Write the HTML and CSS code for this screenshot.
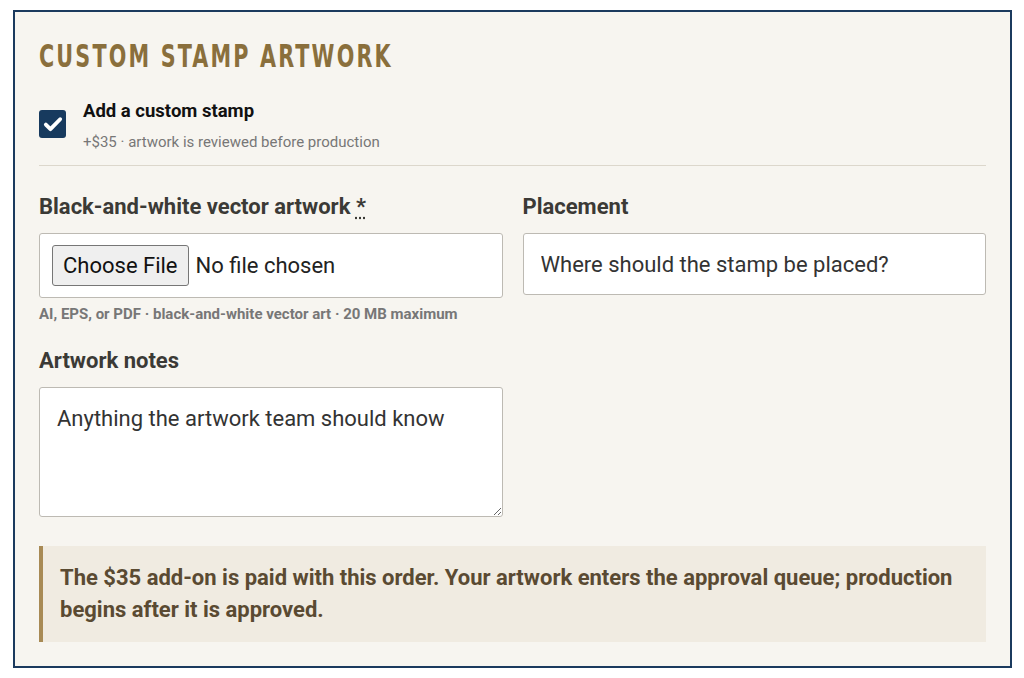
FILE: index.html
```html
<!DOCTYPE html>
<html lang="en">
<head>
<meta charset="utf-8">
<title>Custom stamp artwork</title>
<link rel="stylesheet" href="styles.css">
</head>
<body>
<div class="page">
  <section class="panel">
    <h2 class="panel-title">Custom Stamp Artwork</h2>

    <label class="opt">
      <input type="checkbox" class="opt-input" checked>
      <span class="opt-box" aria-hidden="true">
        <svg viewBox="0 0 24 24" width="22" height="22"><path d="M4.2 12.6l5 5L19.8 6.8" fill="none" stroke="#fff" stroke-width="4.2" stroke-linecap="round" stroke-linejoin="round"/></svg>
      </span>
      <span class="opt-text">
        <span class="opt-title">Add a custom stamp</span>
        <span class="opt-sub">+$35 · artwork is reviewed before production</span>
      </span>
    </label>

    <hr class="rule">

    <div class="grid">
      <div class="field">
        <label class="field-label" for="art">Black-and-white vector artwork <abbr class="req" title="required">*</abbr></label>
        <div class="file-wrap">
          <input type="file" id="art" class="file-input">
        </div>
        <p class="hint">AI, EPS, or PDF · black-and-white vector art · 20 MB maximum</p>
      </div>
      <div class="field">
        <label class="field-label" for="place">Placement</label>
        <input type="text" id="place" class="text-input" placeholder="Where should the stamp be placed?">
      </div>
      <div class="field">
        <label class="field-label" for="notes">Artwork notes</label>
        <textarea id="notes" class="notes" placeholder="Anything the artwork team should know"></textarea>
      </div>
    </div>

    <p class="notice">The $35 add-on is paid with this order. Your artwork enters the approval queue; production begins after it is approved.</p>
  </section>
</div>
</body>
</html>
```

FILE: styles.css
```css
* { box-sizing: border-box; }

html, body {
  margin: 0;
  background: #fff;
}

body {
  font-family: Roboto, "Liberation Sans", sans-serif;
  color: #333;
}

.page {
  padding: 10px 12px 12px 13px;
}

.panel {
  background: #f7f5f0;
  border: 2px solid #1b3a5e;
  padding: 24px;
}

/* condensed display heading: squeeze a bold sans horizontally */
.panel-title {
  display: inline-block;
  margin: 0;
  font-family: "DejaVu Sans Condensed", "DejaVu Sans", sans-serif;
  font-weight: 700;
  font-size: 32px;
  line-height: 40px;
  letter-spacing: 3px;
  text-transform: uppercase;
  white-space: nowrap;
  color: #8a6f3c;
  transform: scaleX(0.72);
  transform-origin: left center;
}

.opt {
  display: flex;
  align-items: flex-start;
  gap: 17px;
  margin-top: 21px;
  cursor: pointer;
}

.opt-input {
  position: absolute;
  opacity: 0;
  pointer-events: none;
}

.opt-box {
  flex: none;
  width: 27px;
  height: 28px;
  margin-top: 13px;
  border-radius: 3px;
  background: #173a5e;
  display: flex;
  align-items: center;
  justify-content: center;
}

.opt-text {
  display: flex;
  flex-direction: column;
}

.opt-title {
  font-size: 18.5px;
  font-weight: 700;
  line-height: 28px;
  color: #111;
}

.opt-sub {
  margin-top: 7px;
  font-size: 15px;
  line-height: 20px;
  color: #777;
}

.rule {
  margin: 13px 0 27px;
  border: 0;
  border-top: 1px solid #dcd7cc;
}

.grid {
  display: grid;
  grid-template-columns: 1fr 1fr;
  column-gap: 20px;
  row-gap: 23px;
}

.field {
  display: flex;
  flex-direction: column;
}

.field-label {
  font-size: 22px;
  font-weight: 700;
  line-height: 28px;
  color: #3b3a36;
  margin-bottom: 12px;
}

.req {
  text-decoration: underline dotted;
  text-underline-offset: 3px;
  cursor: help;
}

.file-wrap {
  background: #fff;
  border: 1px solid #bdbab3;
  border-radius: 3px;
  height: 65px;
  padding: 0 12px;
  display: flex;
  align-items: center;
}

.file-input {
  font-family: Roboto, "Liberation Sans", sans-serif;
  font-size: 22px;
  color: #222;
}

.file-input::file-selector-button {
  font-family: Roboto, "Liberation Sans", sans-serif;
  font-size: 22px;
  color: #111;
  height: 41px;
  padding: 0 10px;
  margin-right: 7px;
  background: #efefef;
  border: 1px solid #767676;
  border-radius: 3px;
}

.hint {
  margin: 6px 0 0;
  font-size: 15px;
  font-weight: 700;
  line-height: 20px;
  color: #777;
}

.text-input {
  height: 62px;
  background: #fff;
  border: 1px solid #bdbab3;
  border-radius: 3px;
  padding: 0 17px;
  font-family: Roboto, "Liberation Sans", sans-serif;
  font-size: 22px;
  color: #222;
}

.text-input::placeholder,
.notes::placeholder {
  color: #333;
  opacity: 1;
}

.notes {
  height: 130px;
  background: #fff;
  border: 1px solid #bdbab3;
  border-radius: 3px;
  padding: 17px;
  font-family: Roboto, "Liberation Sans", sans-serif;
  font-size: 22px;
  line-height: 1.3;
  color: #222;
  resize: vertical;
}

.notice {
  margin: 29px 0 0;
  padding: 16px 20px 16px 17px;
  background: #f0ebe1;
  border-left: 4px solid #a88a55;
  font-size: 22px;
  font-weight: 700;
  line-height: 32px;
  color: #5a4a32;
}
```
